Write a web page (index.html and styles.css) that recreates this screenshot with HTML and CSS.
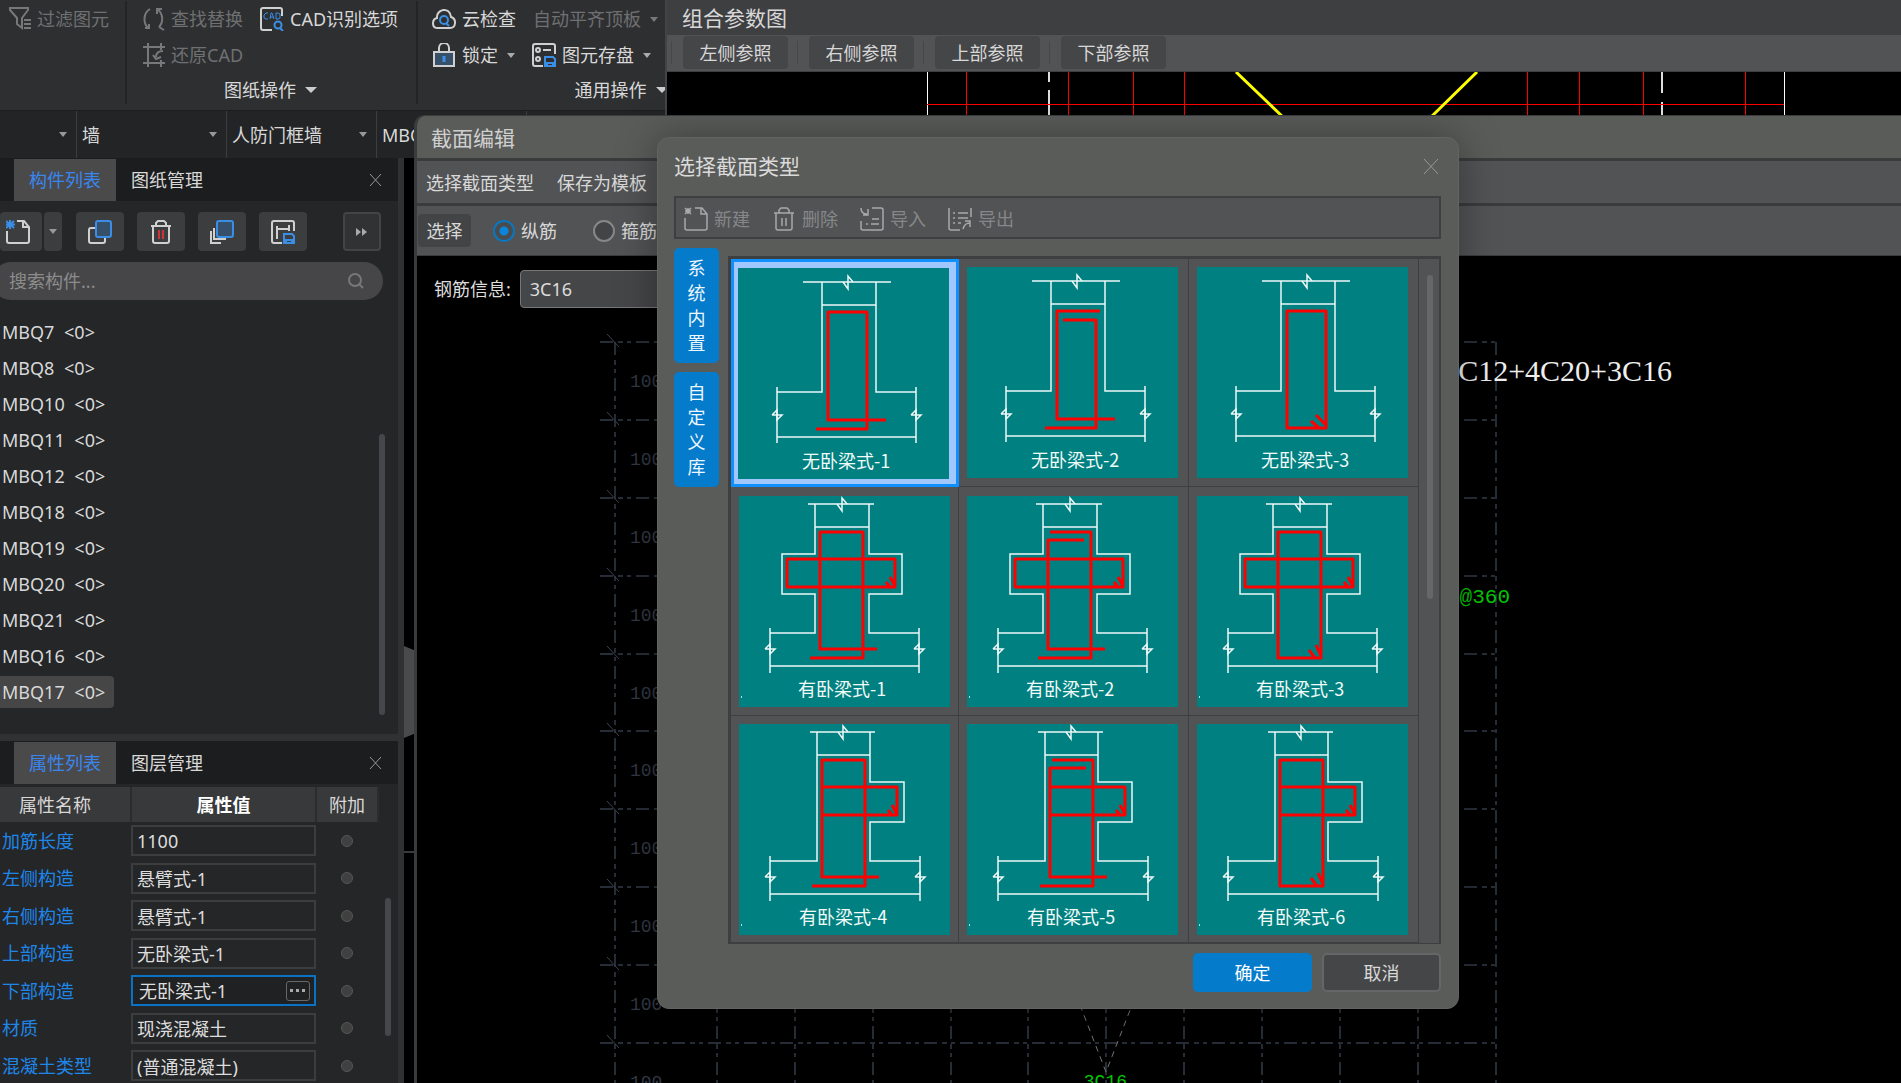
FILE: index.html
```html
<!DOCTYPE html>
<html lang="zh-CN">
<head>
<meta charset="utf-8">
<title>截面编辑</title>
<link rel="stylesheet" href="styles.css">
</head>
<body>
<svg class="defs" aria-hidden="true">
  <defs>
    <g id="brk-h"><path d="M-5 0L0 7V-6L5 0"/></g>
    <g id="brk-v"><path d="M-5 0L5 0L0 5V-5L-5 0"/></g>
    <g id="wall-plain" class="white">
      <path d="M65 14H153M84 14V124H39M138 14V124H178M84 37H138M39 119V175M178 119V175M39 169H178"/>
      <use href="#brk-h" x="110" y="14"/><use href="#brk-v" x="39" y="147"/><use href="#brk-v" x="178" y="147"/>
    </g>
    <g id="wall-cross" class="white">
      <path d="M69 8H135M76 8V58H43V98H76V137H31M130 8V58H163V98H130V137H180M76 31H130M31 132V177M180 132V177M31 170H180"/>
      <use href="#brk-h" x="103" y="8"/><use href="#brk-v" x="31" y="153"/><use href="#brk-v" x="180" y="153"/><path d="M2 201h1"/>
    </g>
    <g id="wall-side" class="white">
      <path d="M71 8H136M78 8V137H31M131 8V58H165V98H131V137H181M78 31H131M31 132V177M181 132V177M31 170H181"/>
      <use href="#brk-h" x="104" y="8"/><use href="#brk-v" x="31" y="153"/><use href="#brk-v" x="181" y="153"/><path d="M2 201h1"/>
    </g>
    <g id="arm-cross" class="red"><path d="M48 63H156V91H48ZM151 81L156 90M147 86L152 92"/></g>
    <g id="arm-side" class="red"><path d="M83 63H158V91H83M153 81L158 90M149 86L154 92"/></g>
    <g id="bars-1" class="red"><path d="M138 153H81V36H124V162H71"/></g>
    <g id="bars-2" class="red"><path d="M117 44H81V153H138M83 36H124V162H71"/></g>
    <g id="bars-3" class="red"><path d="M81 36H124V162H81ZM119 149L124 160M112 154L118 162"/></g>
    <g id="grid-tick"><path d="M-8 -8L4 5"/></g>
  </defs>
</svg>

<div class="app">
  <header class="ribbon">
    <div class="group g-filter">
      <div class="line"><button class="cmd off"><svg width="22" height="24" viewBox="0 0 22 24"><path d="M1 1h18v2l-6 8v10l-5-4v-6L1 3zM15 13h7M15 17h7M15 21h7"/></svg>过滤图元</button></div>
    </div>
    <div class="group g-drawing">
      <div class="line">
        <button class="cmd off"><svg width="22" height="24" viewBox="0 0 22 24"><path d="M7 2C0 6 0 16 5 21M2 21h4v-4M14 2c6 4 7 13 2 18M14 7V2h5M16 20l5 3"/></svg>查找替换</button>
        <button class="cmd"><svg width="24" height="24" viewBox="0 0 24 24"><path d="M22 9V3a2 2 0 0 0-2-2H3a2 2 0 0 0-2 2v18a2 2 0 0 0 2 2h9"/><path class="b fine" d="M8 6H6L4 8v3l2 1h2M10 12l1-6h1l2 6M10 10h3M16 6v6h2l2-1V7l-2-1z"/><circle class="b" cx="18" cy="18" r="3.500"/><path class="b" d="M20 21l3 3"/></svg>CAD识别选项</button>
      </div>
      <div class="line"><button class="cmd off"><svg width="22" height="24" viewBox="0 0 22 24"><path d="M0 4h22M5 0v24M0 20h22M18 0v7M18 17v7M20 8c-5 0-7 2-7 6M10 12l3 4 5-2"/></svg>还原CAD</button></div>
      <div class="caption">图纸操作<i class="tri big"></i></div>
    </div>
    <div class="group g-common">
      <div class="line">
        <button class="cmd"><svg width="24" height="24" viewBox="0 0 24 24"><path d="M6 21C-1 21 0 12 5 11 4 2 18-1 19 10c6 2 5 11-1 11z"/><circle class="b" cx="12" cy="13" r="4"/><path class="b" d="M14 16l3 3"/></svg>云检查</button>
        <button class="cmd off">自动平齐顶板<i class="tri"></i></button>
      </div>
      <div class="line">
        <button class="cmd"><svg width="24" height="24" viewBox="0 0 24 24"><path class="fill" d="M2 9h20v14H2z"/><path d="M7 9V5a5 5 0 0 1 10 0v4"/><path class="b thick" d="M12 13v6"/></svg>锁定<i class="tri"></i></button>
        <button class="cmd"><svg width="24" height="24" viewBox="0 0 24 24"><path d="M23 11V3a2 2 0 0 0-2-2H3a2 2 0 0 0-2 2v18a2 2 0 0 0 2 2h8M11 7h8"/><circle cx="6" cy="7" r="2"/><circle cx="6" cy="16" r="2"/><path class="b" d="M13 14h8l2 2v7H13zM15 23v-3h6v3"/></svg>图元存盘<i class="tri"></i></button>
      </div>
      <div class="caption">通用操作<i class="tri big"></i></div>
    </div>
  </header>

  <nav class="pickers">
    <button class="picker first"><span></span><i class="tri"></i></button>
    <button class="picker"><span>墙</span><i class="tri"></i></button>
    <button class="picker"><span>人防门框墙</span><i class="tri"></i></button>
    <button class="picker"><span>MBQ17</span><i class="tri"></i></button>
  </nav>

  <div class="work">
    <aside class="side">
      <section class="panel">
        <div class="tabs"><button class="tab on">构件列表</button><button class="tab">图纸管理</button><button class="x" aria-label="关闭"><svg width="13" height="14" viewBox="0 0 13 14"><path d="M1 1l11 12M12 1L1 13"/></svg></button></div>
        <div class="tools">
          <button class="tool new" aria-label="新建"><svg width="24" height="24" viewBox="0 0 24 24"><path d="M11 1h7l5 6v14a2 2 0 0 1-2 2H3a2 2 0 0 1-2-2V11M17 1v6h6"/><path class="b" d="M0 1l8 7M8 1L0 8M4 0v9M0 4.500h9"/></svg></button><button class="tool drop" aria-label="更多"><i class="tri"></i></button>
          <button class="tool" aria-label="复制"><svg width="24" height="24" viewBox="0 0 24 24"><path d="M7 8H3a2 2 0 0 0-2 2v11a2 2 0 0 0 2 2h12a2 2 0 0 0 2-2v-3"/><rect class="b fill" x="8" y="1" width="15" height="16" rx="2"/></svg></button>
          <button class="tool" aria-label="删除"><svg width="24" height="24" viewBox="0 0 24 24"><path d="M2 6h20M4 6v15a2 2 0 0 0 2 2h12a2 2 0 0 0 2-2V6M7 6V3l2-2h6l2 2v3"/><path class="r" d="M10 10v9M14 10v9"/></svg></button>
          <button class="tool" aria-label="层间复制"><svg width="24" height="24" viewBox="0 0 24 24"><path d="M4 8v11h12M1 11v12h10"/><rect class="b fill" x="7" y="1" width="16" height="16" rx="2"/></svg></button>
          <button class="tool" aria-label="存档"><svg width="24" height="24" viewBox="0 0 24 24"><path d="M23 11V3a2 2 0 0 0-2-2H3a2 2 0 0 0-2 2v18a2 2 0 0 0 2 2h8M6 6v13M6 9h12M18 5v6"/><path class="b" d="M13 14h8l2 2v7H13zM15 23v-3h6v3"/></svg></button>
          <button class="tool more" aria-label="展开"><svg width="12" height="8" viewBox="0 0 12 8"><path class="solid" d="M0 0l5 4-5 4zM6 0l5 4-5 4z"/></svg></button>
        </div>
        <label class="search"><input type="text" placeholder="搜索构件..." aria-label="搜索构件"><svg width="16" height="16" viewBox="0 0 16 16"><circle cx="7" cy="7" r="6"/><path d="M11 11l4 4"/></svg></label>
        <ul class="items">
          <li><span>MBQ7 <em>&lt;0&gt;</em></span></li>
          <li><span>MBQ8 <em>&lt;0&gt;</em></span></li>
          <li><span>MBQ10 <em>&lt;0&gt;</em></span></li>
          <li><span>MBQ11 <em>&lt;0&gt;</em></span></li>
          <li><span>MBQ12 <em>&lt;0&gt;</em></span></li>
          <li><span>MBQ18 <em>&lt;0&gt;</em></span></li>
          <li><span>MBQ19 <em>&lt;0&gt;</em></span></li>
          <li><span>MBQ20 <em>&lt;0&gt;</em></span></li>
          <li><span>MBQ21 <em>&lt;0&gt;</em></span></li>
          <li><span>MBQ16 <em>&lt;0&gt;</em></span></li>
          <li class="sel"><span>MBQ17 <em>&lt;0&gt;</em></span></li>
        </ul>
        <i class="bar list-bar"></i>
      </section>
      <section class="panel props">
        <div class="tabs"><button class="tab on">属性列表</button><button class="tab">图层管理</button><button class="x" aria-label="关闭"><svg width="13" height="14" viewBox="0 0 13 14"><path d="M1 1l11 12M12 1L1 13"/></svg></button></div>
        <table>
          <thead><tr><th>属性名称</th><th class="strong">属性值</th><th>附加</th></tr></thead>
          <tbody>
            <tr><td><label for="p1">加筋长度</label></td><td><input id="p1" type="text" value="1100"></td><td><input type="radio" aria-label="附加"></td></tr>
            <tr><td><label for="p2">左侧构造</label></td><td><input id="p2" type="text" value="悬臂式-1"></td><td><input type="radio" aria-label="附加"></td></tr>
            <tr><td><label for="p3">右侧构造</label></td><td><input id="p3" type="text" value="悬臂式-1"></td><td><input type="radio" aria-label="附加"></td></tr>
            <tr><td><label for="p4">上部构造</label></td><td><input id="p4" type="text" value="无卧梁式-1"></td><td><input type="radio" aria-label="附加"></td></tr>
            <tr><td><label for="p5">下部构造</label></td><td><div class="pick"><input id="p5" type="text" value="无卧梁式-1"><button aria-label="选择"><svg width="16" height="4" viewBox="0 0 16 4"><path class="solid" d="M0 0h3v3H0zM6 0h3v3H6zM12 0h3v3h-3z"/></svg></button></div></td><td><input type="radio" aria-label="附加"></td></tr>
            <tr><td><label for="p6">材质</label></td><td><input id="p6" type="text" value="现浇混凝土"></td><td><input type="radio" aria-label="附加"></td></tr>
            <tr><td><label for="p7">混凝土类型</label></td><td><input id="p7" type="text" value="(普通混凝土)"></td><td><input type="radio" aria-label="附加"></td></tr>
          </tbody>
        </table>
        <i class="bar prop-bar"></i>
      </section>
    </aside>
    <main class="view"><button class="handle" aria-label="收起"></button><i class="rule"></i></main>
  </div>
</div>

<section class="win params">
  <h2>组合参数图</h2>
  <div class="refs"><button>左侧参照</button><button>右侧参照</button><button>上部参照</button><button>下部参照</button></div>
  <svg class="drawing" height="60">
    <g fill="none">
      <path stroke="#fff" d="M260.500 0V60M1117.500 0V60"/>
      <path stroke="#ddd" stroke-width="2" d="M382 0V10M382 18V60M995 0V21M995 30V60"/>
      <path stroke="#f00" d="M299.500 0V60M401.500 0V60M466.500 0V60M517.500 0V60M860.500 0V60M912.500 0V60M976.500 0V60M1078.500 0V60M260 32.500H1117"/>
      <path stroke="#ff0" stroke-width="3" d="M569 0L617 46M810 0L763 46"/>
    </g>
  </svg>
</section>

<section class="win editor">
  <h2>截面编辑</h2>
  <div class="menu"><button>选择截面类型</button><button>保存为模板</button></div>
  <div class="modes"><button>选择</button><label><input type="radio" name="bar" checked>纵筋</label><label><input type="radio" name="bar">箍筋</label></div>
  <div class="canvas">
    <svg class="plan" width="100%" height="100%">
      <g transform="translate(-417 -256)">
        <g class="grid">
          <path d="M600 342H1496M600 420H1496M600 498H1496M600 576H1496M600 654H1496M600 731H1496M600 809H1496M600 887H1496M600 965H1496M600 1043H1496"/>
          <path d="M615 342V1100M717 342V1100M795 342V1100M873 342V1100M951 342V1100M1028 342V1100M1106 342V1100M1184 342V1100M1262 342V1100M1340 342V1100M1418 342V1100M1496 342V1100"/>
        </g>
        <g class="ticks"><use href="#grid-tick" x="615" y="342"/><use href="#grid-tick" x="615" y="420"/><use href="#grid-tick" x="615" y="498"/><use href="#grid-tick" x="615" y="576"/><use href="#grid-tick" x="615" y="654"/><use href="#grid-tick" x="615" y="731"/><use href="#grid-tick" x="615" y="809"/><use href="#grid-tick" x="615" y="887"/><use href="#grid-tick" x="615" y="965"/><use href="#grid-tick" x="615" y="1043"/></g>
        <g class="dims"><text x="630" y="387">100</text><text x="630" y="465">100</text><text x="630" y="543">100</text><text x="630" y="621">100</text><text x="630" y="699">100</text><text x="630" y="776">100</text><text x="630" y="854">100</text><text x="630" y="932">100</text><text x="630" y="1010">100</text><text x="630" y="1088">100</text></g>
        <path class="lead" d="M1080 1005L1106 1072L1132 1005"/>
        <text class="note" x="1672" y="381">2C12+4C20+3C16</text>
        <text class="green" x="1510" y="603">C6@360</text>
        <text class="green small" x="1127" y="1087">3C16</text>
      </g>
    </svg>
    <label class="rebar">钢筋信息: <input type="text" value="3C16"></label>
  </div>
</section>

<section class="dialog" role="dialog" aria-label="选择截面类型">
  <header><h2>选择截面类型</h2><button class="x" aria-label="关闭"><svg width="16" height="17" viewBox="0 0 16 17"><path d="M1 1l14 15M15 1L1 16"/></svg></button></header>
  <div class="actions">
    <button><svg width="24" height="24" viewBox="0 0 24 24"><path d="M11 1h7l5 6v14a2 2 0 0 1-2 2H3a2 2 0 0 1-2-2V11M17 1v6h6M1 1l6 6M7 1L1 7M4 1v6M1 4h6"/></svg>新建</button>
    <button><svg width="24" height="24" viewBox="0 0 24 24"><path d="M2 6h20M4 6v15a2 2 0 0 0 2 2h12a2 2 0 0 0 2-2V6M7 6V3l2-2h6l2 2v3M10 11v8M14 11v8"/></svg>删除</button>
    <button><svg width="24" height="24" viewBox="0 0 24 24"><path d="M12 1h9a2 2 0 0 1 2 2v18a2 2 0 0 1-2 2H3a2 2 0 0 1-2-2v-7M1 1c0 4 2 6 6 6M8 2v6H3M12 12h7M6 17h2M11 17h8"/></svg>导入</button>
    <button><svg width="24" height="24" viewBox="0 0 24 24"><path d="M1 1v20a2 2 0 0 0 2 2h9M23 1v9M5 6h2M10 6h10M5 11h2M10 11h10M5 16h2M10 16h3M15 22c1-4 3-6 7-6M17 14h5v6"/></svg>导出</button>
  </div>
  <div class="body">
    <div class="libs"><button>系统内置</button><button>自定义库</button></div>
    <div class="frame">
      <div class="cells">
        <button class="cell sel"><svg viewBox="0 0 211 211"><use href="#wall-plain"/><path class="red" d="M148 152H90V44H129V161H78"/><text x="64" y="200">无卧梁式-1</text></svg></button>
        <button class="cell"><svg viewBox="0 0 211 211"><use href="#wall-plain"/><path class="red" d="M133 44H90V152H148M96 53H129V161H78"/><text x="64" y="200">无卧梁式-2</text></svg></button>
        <button class="cell"><svg viewBox="0 0 211 211"><use href="#wall-plain"/><path class="red" d="M90 44H129V161H90ZM119 148L129 158M114 154L122 161"/><text x="64" y="200">无卧梁式-3</text></svg></button>
        <button class="cell"><svg viewBox="0 0 211 211"><use href="#wall-cross"/><use href="#arm-cross"/><use href="#bars-1"/><text x="59" y="200">有卧梁式-1</text></svg></button>
        <button class="cell"><svg viewBox="0 0 211 211"><use href="#wall-cross"/><use href="#arm-cross"/><use href="#bars-2"/><text x="59" y="200">有卧梁式-2</text></svg></button>
        <button class="cell"><svg viewBox="0 0 211 211"><use href="#wall-cross"/><use href="#arm-cross"/><use href="#bars-3"/><text x="59" y="200">有卧梁式-3</text></svg></button>
        <button class="cell"><svg viewBox="0 0 211 211"><use href="#wall-side"/><use href="#arm-side"/><use href="#bars-1" x="2"/><text x="60" y="200">有卧梁式-4</text></svg></button>
        <button class="cell"><svg viewBox="0 0 211 211"><use href="#wall-side"/><use href="#arm-side"/><use href="#bars-2" x="2"/><text x="60" y="200">有卧梁式-5</text></svg></button>
        <button class="cell"><svg viewBox="0 0 211 211"><use href="#wall-side"/><use href="#arm-side"/><use href="#bars-3" x="2"/><text x="60" y="200">有卧梁式-6</text></svg></button>
      </div>
      <div class="track"><i></i></div>
    </div>
  </div>
  <footer><button class="ok">确定</button><button class="cancel">取消</button></footer>
</section>
</body>
</html>
```

FILE: styles.css
```css
* { box-sizing: border-box; }
html, body { height: 100%; margin: 0; }
body { position: relative; overflow: hidden; background: #000; color: #d8d8d8; font: 18px/24px "Noto Sans", "Noto Sans CJK SC", sans-serif; }
button, input { font: inherit; color: inherit; border: 0; padding: 0; margin: 0; background: none; white-space: nowrap; }
h2, ul { margin: 0; padding: 0; font-weight: 400; }
ul { list-style: none; }
em { font-style: normal; }
svg { display: block; flex: none; fill: none; stroke: #d0d0d0; stroke-width: 2; }
.defs { position: absolute; width: 0; height: 0; }
.b { stroke: #3a8ee6; }
.b.thick { stroke-width: 3; }
.b.fine { stroke-width: 1; }
.r { stroke: #d03438; }
.fill { fill: #36506a; }
.solid { fill: #aaa; stroke: none; }
.tri { width: 0; height: 0; border: 4px solid transparent; border-top: 5px solid #aaa; border-bottom: 0; }
.tri.big { border-width: 6px 6px 0; border-top-color: #ccc; }

/* main application */
.app { height: 100%; display: flex; flex-direction: column; }
.ribbon { display: flex; height: 110px; padding-top: 1px; background: #2e2f31; overflow: hidden; }
.group { flex: none; display: grid; grid-template-rows: 36px 36px 34px; border-right: 2px solid #232426; margin-bottom: 6px; }
.g-filter { width: 127px; padding-left: 9px; }
.g-drawing { width: 291px; padding-left: 16px; }
.g-common { width: 412px; padding-left: 14px; }
.line { display: flex; align-items: center; gap: 17px; }
.cmd { display: flex; align-items: center; gap: 6px; }
.cmd .tri { margin-left: 3px; }
.off { color: #6f7072; }
.off svg { stroke: #77787a; }
.off .tri { border-top-color: #77787a; }
.caption { grid-row: 3; display: flex; align-items: center; justify-content: center; gap: 9px; margin-left: -18px; }
.pickers { display: flex; height: 48px; background: #232426; border-top: 1px solid #1c1d1e; }
.picker { flex: none; width: 150px; padding: 0 9px 0 5px; display: flex; align-items: center; justify-content: space-between; border-right: 1px solid #3c3d3f; }
.picker.first { width: 77px; }
.picker .tri { border-top-color: #999; }
.work { flex: 1; display: flex; min-height: 0; }
.side { flex: none; width: 404px; display: flex; flex-direction: column; gap: 7px; background: #303133; padding-right: 6px; }
.panel { position: relative; background: #242628; }
.tabs { display: flex; align-items: center; height: 43px; background: #1c1d1f; padding: 1px 16px 0 14px; }
.tab { height: 42px; padding: 0 15px; }
.tab.on { background: #4a4a4b; color: #3a86f0; }
.x { margin-left: auto; }
.x svg { stroke: #95979a; stroke-width: 1; }
.tools { display: flex; padding: 11px 17px 11px 0; }
.tool { display: flex; align-items: center; justify-content: center; width: 48px; height: 39px; margin-right: 13px; background: #3c3d3f; border-radius: 4px; }
.tool.new { width: 42px; margin-right: 2px; padding-right: 6px; }
.tool.drop { width: 18px; margin-right: 14px; }
.tool.drop .tri { border-top-color: #999; }
.tool.more { width: 38px; margin: 0 0 0 auto; background: #313234; border: 2px solid #434446; }
.search { display: flex; align-items: center; height: 38px; margin: 0 15px 0 -8px; padding: 0 19px 0 17px; border-radius: 19px; background: #464648; }
.search input { flex: 1; min-width: 0; }
.search input::placeholder { color: #8c8c8c; opacity: 1; }
.search svg { stroke: #777; }
.items { padding: 14px 0 24px; }
.items li { height: 36px; display: flex; align-items: center; }
.items span { padding: 4px 9px 4px 2px; border-radius: 0 4px 4px 0; }
.items em { margin-left: 5px; }
.items .sel span { background: #464646; }
.bar { position: absolute; width: 6px; border-radius: 3px; background: #46474a; }
.list-bar { right: 13px; top: 276px; height: 281px; }
.prop-bar { right: 7px; top: 157px; height: 138px; }
.props { flex: 1; min-height: 0; overflow: hidden; }
table { width: 379px; table-layout: fixed; border-collapse: collapse; margin-top: 3px; }
th { height: 35px; padding: 0; background: #38393a; font-weight: 400; border-right: 2px solid #2b2c2d; }
th:nth-child(1) { width: 131px; padding-right: 20px; }
th:nth-child(3) { width: 62px; }
th.strong { font-weight: 700; color: #fff; }
td { height: 37px; padding: 0; color: #1f86e8; }
tr:nth-child(even) td { height: 38px; }
td:first-child { padding-left: 2px; }
td input[type=text] { display: block; width: 185px; height: 31px; padding: 0 4px; border: 2px solid #3c3d3f; color: #ddd; }
.pick { display: flex; align-items: center; width: 185px; height: 31px; border: 2px solid #0a72c4; padding: 0 4px 0 6px; background: #1f2122; }
.pick input[type=text] { flex: 1; min-width: 0; width: auto; height: 24px; border: 0; padding: 0; }
.pick button { display: flex; align-items: center; justify-content: center; width: 24px; height: 20px; border: 1px solid #66686a; border-radius: 3px; }
td input[type=radio] { display: block; margin: 0 auto; appearance: none; width: 12px; height: 12px; border: 1px solid #565656; border-radius: 50%; background: #404040; }
.view { flex: 1; position: relative; background: #000; }
.handle { position: absolute; left: 0; top: 488px; width: 11px; height: 92px; background: #4a4a4a; clip-path: polygon(0 0, 100% 5%, 100% 95%, 0 100%); }
.rule { position: absolute; left: 0; top: 693px; width: 11px; height: 2px; background: #3a3a3a; }

/* floating windows */
.win { position: absolute; right: 0; display: flex; flex-direction: column; overflow: hidden; }
.win h2, .dialog h2 { font-size: 21px; line-height: 32px; }
.params { left: 665px; top: 0; height: 130px; background: #000; border-left: 2px solid #434446; }
.params h2 { padding: 2px 15px 1px; background: #3e3f41; }
.refs { display: flex; flex: none; height: 37px; padding: 1px 16px; gap: 21px; background: #525355; border-bottom: 1px solid #3e3f41; }
.refs button { position: relative; width: 105px; height: 33px; border-radius: 4px; background: #454648; }
.refs button::before { content: ""; position: absolute; left: -12px; top: 5px; bottom: 5px; width: 1px; background: #464749; }
.drawing { width: 100%; stroke-width: 1; }
.editor { left: 414px; top: 115px; bottom: 0; background: #5a5c5a; border: solid #3a3b3c; border-width: 1px 0 0 3px; border-radius: 11px 0 0 0; }
.editor h2 { flex: none; padding: 6px 14px 4px; color: #cfcfcf; }
.menu, .modes { display: flex; align-items: center; background: #525355; border-top: 3px solid #3a3b3c; }
.menu { flex: none; height: 45px; padding: 2px 9px 0; gap: 23px; }
.modes { flex: none; height: 53px; padding-left: 1px; border-bottom: 1px solid #3a3b3c; }
.modes button { width: 53px; height: 33px; border-radius: 4px; background: #434446; margin-right: 22px; }
.modes label { display: flex; align-items: center; gap: 6px; margin-right: 36px; }
.modes input { appearance: none; width: 22px; height: 22px; border: 2px solid #858789; border-radius: 50%; background: #434446; }
.modes input:checked { border-color: #0a76bf; background: radial-gradient(circle, #0a85dc 0 4px, #4a4b4d 5px); }
.canvas { flex: 1; position: relative; background: #000; min-height: 0; }
.plan { position: absolute; left: 0; top: 0; stroke: none; }
.grid, .ticks { stroke: #272d37; stroke-width: 2; }
.grid { stroke-dasharray: 13 5 5 4 4 5; }
.ticks { stroke-width: 1; stroke: #3c4450; }
.dims { fill: #323844; font: 18px "Liberation Mono", monospace; }
.lead { stroke: #777; stroke-width: 1; stroke-dasharray: 6 5; }
.note { fill: #eee; font: 30px "Liberation Serif", serif; text-anchor: end; }
.green { fill: #00c800; font: 21px "Liberation Mono", monospace; text-anchor: end; }
.green.small { font-size: 18px; }
.rebar { position: relative; display: flex; align-items: center; gap: 9px; padding: 14px 17px; color: #ddd; }
.rebar input { width: 260px; height: 38px; padding: 0 9px; border: 1px solid #777; border-radius: 4px; background: #454648; }

/* section type dialog */
.dialog { position: absolute; left: 657px; top: 137px; width: 802px; padding: 0 17px 16px 16px; background: #5a5c5a; border: 1px solid #626462; border-radius: 12px; box-shadow: 0 0 40px rgba(0, 0, 0, .35); }
.dialog header { display: flex; align-items: center; height: 58px; padding: 0 2px 2px 0; }
.dialog h2 { color: #dadada; }
.actions { display: flex; align-items: center; gap: 22px; height: 43px; padding: 2px 8px 0; background: #525355; border: 2px solid #3e3f41; color: #868789; }
.actions button { display: flex; align-items: center; gap: 6px; }
.actions svg { stroke: #a8a9aa; stroke-width: 1.500; }
.body { display: flex; gap: 9px; padding-top: 9px; }
.libs { display: flex; flex-direction: column; gap: 9px; width: 45px; }
.libs button { height: 115px; padding: 0 13px; border-radius: 5px; background: #057bcb; color: #eef6ff; line-height: 25px; white-space: normal; word-break: break-all; }
.frame { flex: 1; display: flex; margin-top: 8px; border: solid #3e3f41; border-width: 3px 2px 1px 3px; background: #525355; }
.cells { flex: 1; display: grid; grid-template: 228px 229px 227px / 228px 230px 1fr; }
.cell { display: flex; align-items: center; padding-left: 8px; border: solid #3e3f41; border-width: 0 1px 1px 0; }
.cell.sel { padding-left: 4px; border: 3px solid #0f90ff; background: #a0c8ff; }
.cell svg { width: 211px; height: 211px; background: #008080; }
.white { stroke: #eef8f8; stroke-width: 1.500; }
.red { stroke: #f00; stroke-width: 3; stroke-linejoin: round; }
.cell text { fill: #f2fafa; stroke: none; font: 18px "Noto Sans CJK SC", sans-serif; }
.track { width: 20px; padding: 16px 0 0 8px; }
.track i { display: block; width: 6px; height: 324px; border-radius: 3px; background: #666769; }
.dialog footer { display: flex; justify-content: flex-end; gap: 10px; padding-top: 9px; }
.dialog footer button { width: 119px; height: 39px; border-radius: 5px; }
.ok { background: #057bcb; color: #fff; }
.dialog footer .cancel { background: #454648; border: 2px solid #656668; }
```
